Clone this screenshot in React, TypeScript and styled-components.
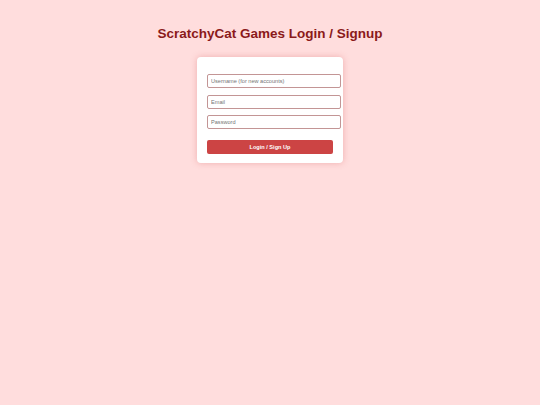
import React, { useState } from 'react';
import styled, { createGlobalStyle } from 'styled-components';

const GlobalStyle = createGlobalStyle`
    html, body {
        margin: 0;
        padding: 0;
        background: #FFDDDD;
        font-family: "Liberation Sans", Arial, sans-serif;
    }
`

const App = () => {
    const [username, setUsername] = useState('')
    const [email, setEmail] = useState('')
    const [password, setPassword] = useState('')

    const submit = (e: React.FormEvent) => {
        e.preventDefault()
    }

    return (
        <>
            <GlobalStyle />
            <Page>
                <Title>ScratchyCat Games Login / Signup</Title>
                <Card>
                    <Form onSubmit={submit}>
                        <Field value={username} onChange={e => setUsername(e.target.value)} placeholder="Username (for new accounts)" />
                        <Field value={email} onChange={e => setEmail(e.target.value)} placeholder="Email" />
                        <Field type="password" value={password} onChange={e => setPassword(e.target.value)} placeholder="Password" />
                        <SubmitBtn type="submit">Login / Sign Up</SubmitBtn>
                    </Form>
                </Card>
            </Page>
        </>
    );
};

export default App;

const Page = styled.div`
    display: flex;
    flex-direction: column;
    align-items: center;
    padding-top: 26px;
    min-height: 405px;
    box-sizing: border-box;
`

const Title = styled.h1`
    margin: 0;
    font-size: 13.5px;
    line-height: 16px;
    font-weight: 700;
    color: #8B1A1A;
`

const Card = styled.div`
    margin-top: 15px;
    width: 126px;
    padding: 10px 10px 9px;
    background: #fff;
    border-radius: 4px;
    box-shadow: 0 0 6px rgba(210, 90, 90, 0.35);
`

const Form = styled.form`
    display: block;
    padding-top: 7px;
`

const Field = styled.input`
    display: block;
    box-sizing: content-box;
    width: 100%;
    height: 7px;
    padding: 2.5px 3px;
    margin: 0 0 6.5px;
    border: 1px solid #C39595;
    border-radius: 2px;
    font-family: "Liberation Sans", Arial, sans-serif;
    font-size: 5.6px;
    color: #333;
    &:focus {
        outline: none;
    }
    ::placeholder {
        color: #777;
    }
`

const SubmitBtn = styled.button`
    display: block;
    width: 100%;
    height: 14px;
    margin-top: 11px;
    padding: 0;
    border: none;
    border-radius: 2px;
    background: #CC4444;
    color: #fff;
    font-family: "Liberation Sans", Arial, sans-serif;
    font-size: 5.6px;
    font-weight: 700;
    cursor: pointer;
`
